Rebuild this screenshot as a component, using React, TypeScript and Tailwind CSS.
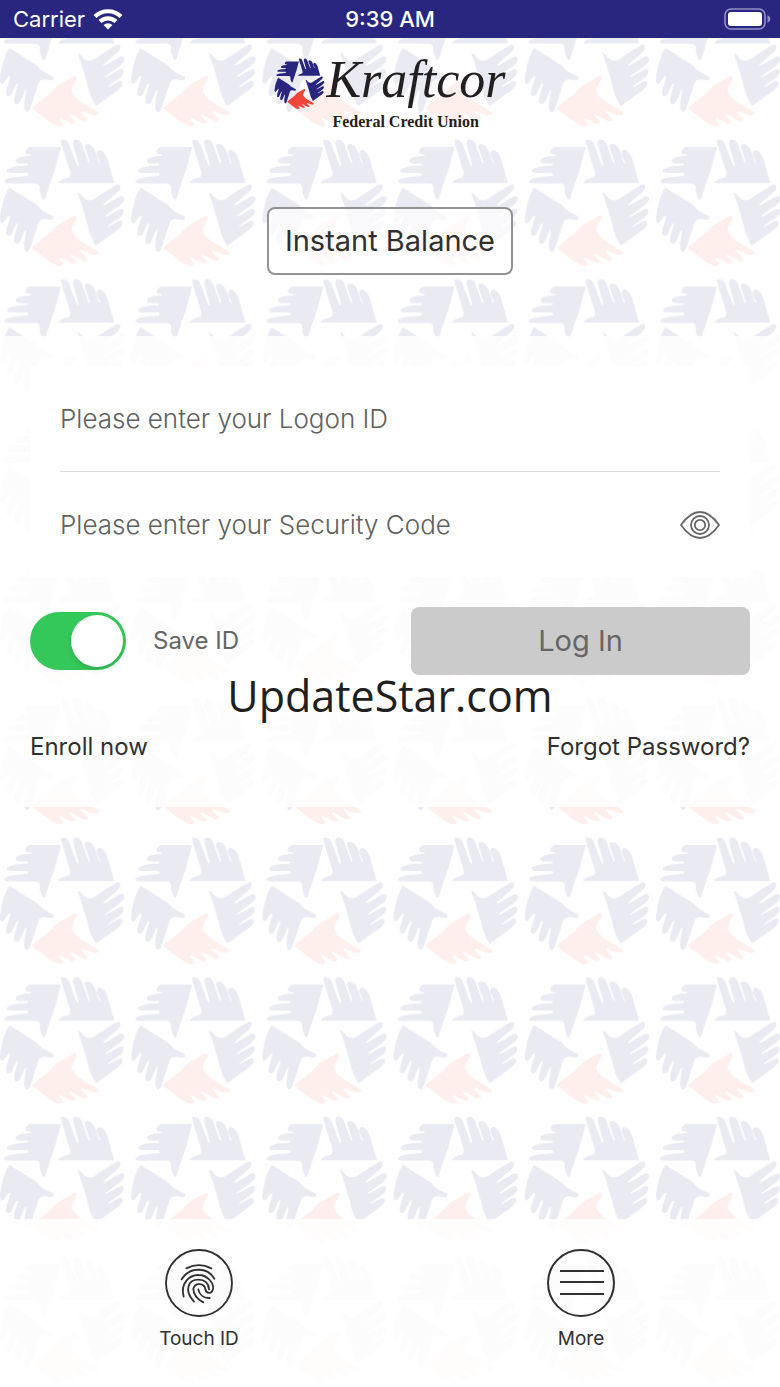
import React, { useState } from "react";

const Hands = ({ blue, red }: { blue: string; red: string }) => (
  <>
    <g fill={blue}>
      <path d="M88 30 L183 30 L164 100 L150 140 L135 186 Q130 191 127 184 L120 165 L119 148 Q116 139 108 139 L20 139 Q10 137 14 130 Q25 121 60 119 L84 117 Q88 113 82 108 L30 108 Q17 105 22 97 Q35 87 80 86 Q88 82 82 79 L55 79 Q42 74 50 65 Q60 58 92 57 Q96 53 90 52 L80 51 Q72 45 80 36 Z" />
      <path d="M343 138 L175 138 Q180 128 200 123 Q214 121 210 105 L184 20 Q180 5 190 8 Q200 8 206 18 L230 82 Q235 90 236 82 L219 22 Q218 6 230 8 Q239 8 245 20 L265 76 Q269 84 270 76 L254 30 Q254 18 268 22 Q279 26 284 38 L297 78 Q300 82 301 76 L290 52 Q290 38 302 39 Q314 44 322 64 Z" />
      <path d="M28 152 L112 205 Q122 222 160 238 Q166 249 150 249 Q122 240 116 256 L90 335 Q84 350 76 342 Q70 334 74 308 L79 280 Q77 274 73 284 L60 314 Q50 326 43 316 Q40 306 48 282 L55 260 Q53 254 47 264 L34 292 Q24 302 18 290 Q18 276 26 256 L31 238 Q29 232 23 240 L10 258 Q0 262 0 245 Q4 200 20 165 Z" />
      <path d="M233 168 Q240 166 250 182 Q262 194 280 188 Q300 174 335 152 L352 142 Q364 140 361 154 Q356 164 340 176 L310 202 Q310 207 318 203 L360 178 Q372 174 373 186 Q372 197 350 212 L316 236 Q314 241 322 237 L360 216 Q372 212 371 226 Q368 237 350 248 L324 266 Q324 271 330 267 L356 252 Q368 248 368 260 Q364 272 345 285 L288 326 Q270 300 262 260 L244 200 Z" />
    </g>
    <path
      fill={red}
      d="M95 332 Q110 320 150 288 Q170 262 195 252 L222 236 Q232 234 230 246 Q216 268 214 278 Q216 296 250 318 Q280 336 296 346 Q298 356 276 352 L246 341 Q239 341 247 349 L262 364 Q264 374 250 372 L212 351 Q205 350 211 357 L226 372 Q226 382 212 378 L182 362 Q175 361 179 368 L190 380 Q188 390 172 386 Q150 378 130 360 Z"
    />
  </>
);

const Backdrop = () => (
  <svg className="absolute inset-0 h-full w-full" aria-hidden="true">
    <defs>
      <pattern id="hands" patternUnits="userSpaceOnUse" x="0" y="-2.6" width="131.2" height="139.6">
        <g transform="scale(0.3333)">
          <Hands blue="#e9eaf2" red="#feeeec" />
        </g>
      </pattern>
    </defs>
    <rect width="100%" height="100%" fill="url(#hands)" />
  </svg>
);

const StatusBar = () => (
  <header className="grid h-[38px] grid-cols-3 items-center bg-[#28267f] text-white">
    <div className="flex items-center gap-2 pl-[13px]">
      <span className="text-[22px] leading-7">Carrier</span>
      <svg width="30" height="21" viewBox="0 0 30 21" fill="none" stroke="white" strokeWidth="4.2" aria-hidden="true">
        <path d="M2 7.6 A18.5 18.5 0 0 1 28 7.6" />
        <path d="M7 12.6 A11.4 11.4 0 0 1 23 12.6" />
        <path d="M15 20.4 L10.6 16 A6.2 6.2 0 0 1 19.4 16 Z" fill="white" stroke="none" />
      </svg>
    </div>
    <span className="text-center text-[22px] leading-7 font-medium">9:39 AM</span>
    <div className="flex justify-end pr-2">
      <svg width="48" height="22" viewBox="0 0 48 22" aria-hidden="true">
        <rect x="1" y="1" width="40" height="20" rx="6" fill="none" stroke="#9391c4" strokeWidth="1.6" />
        <rect x="4" y="4" width="34" height="14" rx="3" fill="white" />
        <path d="M43.5 7 Q46.5 9 46.5 11 Q46.5 13 43.5 15 Z" fill="#9391c4" />
      </svg>
    </div>
  </header>
);

const Logo = () => (
  <div className="flex justify-center">
    <svg className="mt-[19px] h-[54px] w-[52px]" viewBox="-4 4 390 390" aria-hidden="true">
      <Hands blue="#28267f" red="#f2453a" />
    </svg>
    <div className="flex flex-col font-['Liberation_Serif',serif] text-[#231f20]">
      <span className="pt-3 text-[52px] leading-[60px] italic">Kraftcor</span>
      <span className="pl-[6px] text-base leading-6 font-bold">Federal Credit Union</span>
    </div>
  </div>
);

const App: React.FC = () => {
  const [logonId, setLogonId] = useState("");
  const [code, setCode] = useState("");
  const [showCode, setShowCode] = useState(false);
  const [saveId, setSaveId] = useState(true);

  return (
    <div className="relative min-h-screen bg-white font-['Inter',sans-serif] text-[#303030]">
      <Backdrop />

      <div className="relative flex min-h-screen flex-col">
        <StatusBar />

        {/* Logo and balance button */}
        <section className="flex h-[298px] flex-col items-center">
          <Logo />
          <button
            type="button"
            className="mt-[73px] h-[68px] rounded-lg border-2 border-[#929292] bg-white/70 px-4 text-[29px] leading-8"
          >
            Instant Balance
          </button>
        </section>

        {/* Login form */}
        <form className="bg-white/85 p-[30px] pb-11" onSubmit={(e) => e.preventDefault()}>
          <div className="bg-white px-[30px]">
            <div className="flex h-[106px] items-center border-b border-[#dedede]">
              <input
                type="text"
                aria-label="Logon ID"
                placeholder="Please enter your Logon ID"
                className="w-full bg-transparent text-[26px] leading-8 font-[350] outline-none placeholder:text-[#606060]"
                value={logonId}
                onChange={(e) => setLogonId(e.target.value)}
              />
            </div>
            <div className="flex h-[105px] items-center">
              <input
                type={showCode ? "text" : "password"}
                aria-label="Security Code"
                placeholder="Please enter your Security Code"
                className="min-w-0 flex-1 bg-transparent text-[26px] leading-8 font-[350] outline-none placeholder:text-[#606060]"
                value={code}
                onChange={(e) => setCode(e.target.value)}
              />
              <button type="button" aria-label="Show security code" onClick={() => setShowCode(!showCode)}>
                <svg width="40" height="28" viewBox="0 0 40 28" fill="none" stroke="#666666" strokeWidth="1.8">
                  <path d="M1 14 C8 4 14 1 20 1 C26 1 32 4 39 14 C32 24 26 27 20 27 C14 27 8 24 1 14 Z" />
                  <circle cx="20" cy="14" r="9" />
                  <circle cx="20" cy="14" r="5.2" />
                </svg>
              </button>
            </div>
          </div>

          <div className="mt-[30px] grid grid-cols-2 items-center gap-[42px]">
            <div className="flex items-center gap-[27px]">
              <input
                id="save-id"
                type="checkbox"
                role="switch"
                checked={saveId}
                onChange={(e) => setSaveId(e.target.checked)}
                className="h-[58px] w-24 appearance-none rounded-full bg-[#d1d1d6] p-[3px] before:block before:size-[52px] before:rounded-full before:bg-white before:shadow-md checked:bg-[#34c759] checked:before:ml-auto"
              />
              <label htmlFor="save-id" className="text-2xl text-[#666666]">
                Save ID
              </label>
            </div>
            <button type="submit" className="h-[68px] rounded-lg bg-[#cbcbcb] text-[29px] leading-8 text-[#666666]">
              Log In
            </button>
          </div>

          <div className="mt-14 flex justify-between text-2xl">
            <a href="#enroll">Enroll now</a>
            <a href="#forgot">Forgot Password?</a>
          </div>
        </form>

        <div className="flex-1" />

        {/* Bottom actions */}
        <nav className="grid h-[168px] grid-cols-2 bg-white/85 px-2 pt-[30px] text-[19px] leading-7">
          <button type="button" className="flex flex-col items-center gap-2">
            <svg width="68" height="68" viewBox="75 56 204 204" fill="none" stroke="#303030" strokeWidth="5.5">
              <circle cx="177" cy="158" r="99" />
              <g strokeLinecap="round">
                <path d="M139 114 Q177 95 214 114" />
                <path d="M125 147 C148 109 202 109 223 145" />
                <path d="M131 199 C120 160 148 133 176 134 C204 134 222 160 219 176 C215 193 198 190 196 176 C193 158 165 155 160 175 C160 195 172 206 190 216" />
                <path d="M162 214 C130 178 146 148 175 148 C196 148 206 160 207 177" />
                <path d="M175 177 C178 192 190 204 209 203" />
              </g>
            </svg>
            <span>Touch ID</span>
          </button>
          <button type="button" className="flex flex-col items-center gap-2">
            <svg width="68" height="68" viewBox="0 0 68 68" fill="none" stroke="#303030" strokeWidth="2">
              <circle cx="34" cy="34" r="33" />
              <path d="M13 22 H57 M13 33 H57 M13 45 H57" />
            </svg>
            <span>More</span>
          </button>
        </nav>
      </div>

      {/* Watermark */}
      <div className="pointer-events-none absolute inset-0 flex items-center justify-center">
        <span className="pt-1 font-['Open_Sans',sans-serif] text-[43px] leading-[60px] text-[#202020]">UpdateStar.com</span>
      </div>
    </div>
  );
};

export default App;
